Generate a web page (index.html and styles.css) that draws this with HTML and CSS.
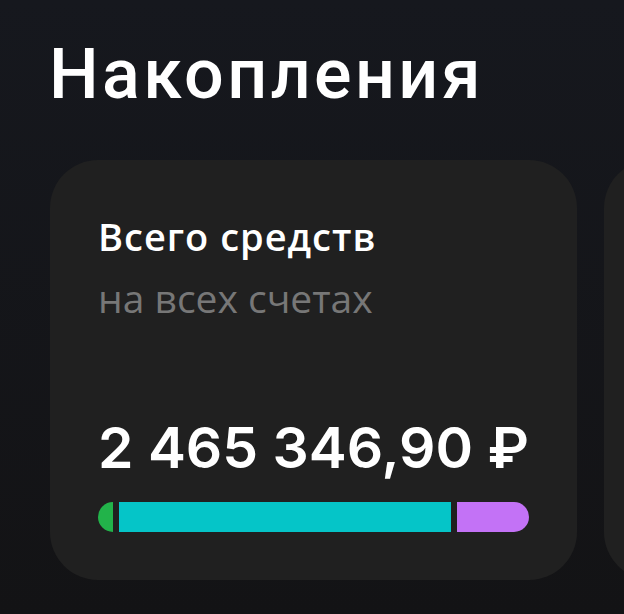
FILE: index.html
```html
<!DOCTYPE HTML>
<html>

<head>
    <meta charset="utf-8">
    <title>Накопления</title>
    <meta name="viewport" content="width=device-width,initial-scale=1" />
    <link rel="stylesheet" href="styles.css">
</head>

<body>
    <div class="page">
        <h1 class="page-title">Накопления</h1>

        <div class="cards">
            <div class="card">
                <div class="card-title">Всего средств</div>
                <div class="card-sub">на всех счетах</div>

                <div class="card-amount">2 465 346,90 ₽</div>
                <div class="bar">
                    <div class="bar-part bar-green" style="flex: 15"></div>
                    <div class="bar-part bar-cyan" style="flex: 333"></div>
                    <div class="bar-part bar-purple" style="flex: 72"></div>
                </div>
            </div>
            <div class="card"></div>
        </div>
    </div>
</body>

</html>
```

FILE: styles.css
```css
html, body {
    padding: 0;
    border: 0;
    margin: 0;
    height: 100%;
}

body {
    background: linear-gradient(180deg, #16181e 0%, #131315 100%);
    overflow: hidden;
    font-family: "Open Sans", "Noto Sans", sans-serif;
    color: #ffffff;
}

.page {
    padding: 34px 0 0 50px;
}

.page-title {
    margin: 0 0 0 -1px;
    font-family: Roboto, "Liberation Sans", sans-serif;
    font-weight: 500;
    font-size: 70px;
    line-height: 80px;
    letter-spacing: 3.4px;
}

.cards {
    display: flex;
    gap: 27px;
    margin-top: 46px;
}

.card {
    flex: none;
    width: 527px;
    height: 420px;
    box-sizing: border-box;
    padding: 53px 48px 48px 48px;
    border-radius: 48px;
    background: #202020;
    display: flex;
    flex-direction: column;
}

.card-title {
    font-weight: 600;
    font-size: 38px;
    line-height: 46px;
    letter-spacing: 1px;
}

.card-sub {
    margin-top: 16px;
    color: #777777;
    font-size: 39px;
    line-height: 46px;
}

.card-amount {
    margin-top: auto;
    font-family: Inter, "Liberation Sans", sans-serif;
    font-weight: 600;
    font-size: 57px;
    line-height: 60px;
}

.bar {
    display: flex;
    gap: 6px;
    height: 30px;
    margin-top: 24px;
    border-radius: 15px;
    overflow: hidden;
}

.bar-green {
    background: #22b34a;
}

.bar-cyan {
    background: #05c5c8;
}

.bar-purple {
    background: #c372f6;
}
```
